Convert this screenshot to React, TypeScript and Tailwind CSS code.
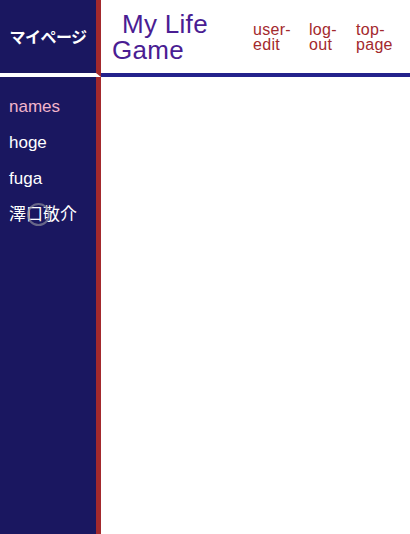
import React from "react";

const font = { fontFamily: '"Liberation Sans", "Noto Sans CJK JP", sans-serif' };

export default function App() {
  return (
    <div className="flex h-[534px] w-[410px] bg-white" style={font}>
      <div className="flex w-[101px] shrink-0 flex-col">
        <div className="flex h-[77px] items-center justify-center border-r-[5px] border-b-4 border-r-[#a3292d] border-b-white bg-[#1a1760] pt-[2px] text-[16px] font-bold tracking-[-0.5px] text-white">
          マイページ
        </div>
        <div className="relative flex flex-1 flex-col border-r-[5px] border-r-[#a3292d] bg-[#1a1760] pt-[12px] pl-[9px] text-[17px]">
          <div className="flex h-[36px] items-center text-[#f2b5cb]">names</div>
          <div className="flex h-[36px] items-center text-white">hoge</div>
          <div className="flex h-[36px] items-center text-white">fuga</div>
          <div className="flex h-[36px] items-center text-white">澤口敬介</div>
          <div className="absolute top-[126px] left-[27px] h-[23px] w-[23px] rounded-full border-2 border-[#8a8a9a]/70"></div>
        </div>
      </div>
      <div className="flex flex-1 flex-col">
        <div className="flex h-[77px] items-center border-b-4 border-b-[#24228c] pl-[11px]">
          <div className="w-[122px] indent-[10px] text-[26px] leading-[26px] tracking-[0.3px] text-[#4a1d93]">My Life Game</div>
          <div className="ml-[19px] w-[40px] text-[16px] tracking-[0.3px] leading-[15px] text-[#a3292d]">user-edit</div>
          <div className="ml-[16px] w-[30px] text-[16px] tracking-[0.3px] leading-[15px] text-[#a3292d]">log-out</div>
          <div className="ml-[17px] w-[40px] text-[16px] tracking-[0.3px] leading-[15px] text-[#a3292d]">top-page</div>
        </div>
        <div className="flex-1"></div>
      </div>
    </div>
  );
}
